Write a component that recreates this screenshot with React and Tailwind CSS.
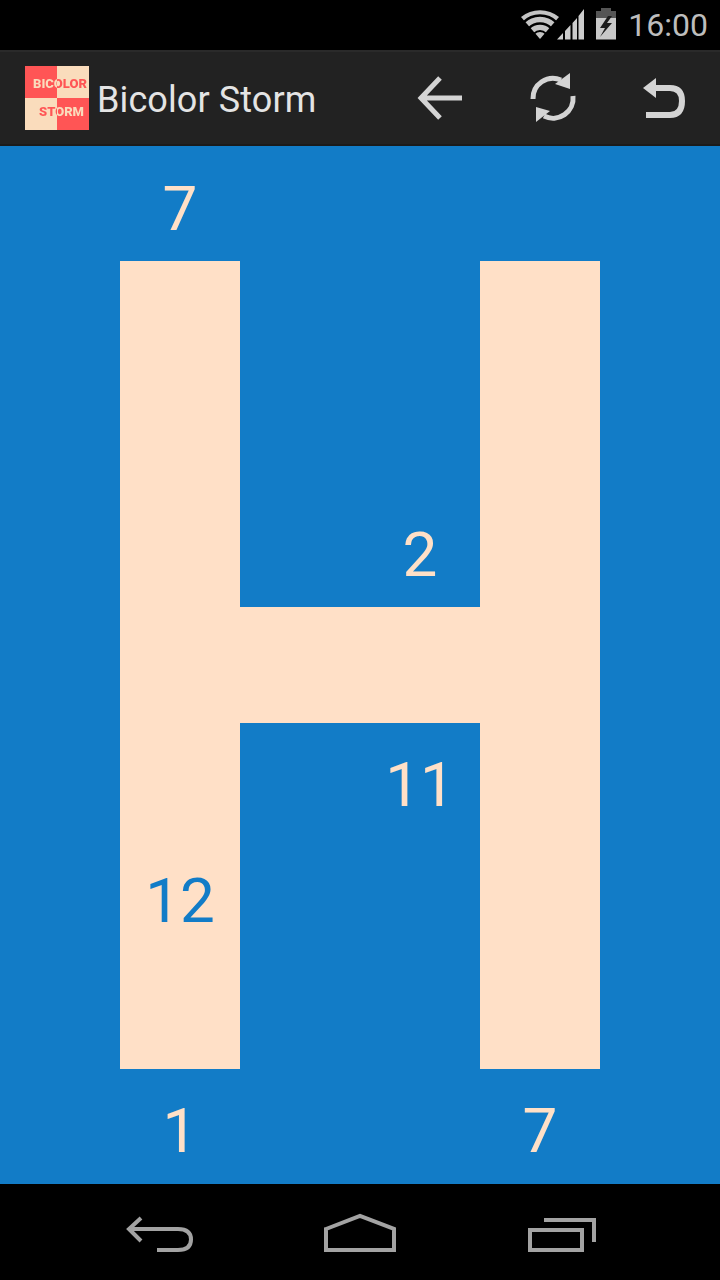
const CREAM = "bg-[#ffe0c7]";

const cells = [
  { r: 0, c: 1, n: "7" },
  { r: 3, c: 3, n: "2" },
  { r: 5, c: 3, n: "11" },
  { r: 6, c: 1, n: "12" },
  { r: 8, c: 1, n: "1" },
  { r: 8, c: 4, n: "7" },
];

function isFilled(r, c) {
  if (r >= 1 && r <= 7 && (c === 1 || c === 4)) return true;
  return r === 4 && c >= 1 && c <= 4;
}

function Board() {
  const items = [];
  for (let r = 0; r < 9; r++) {
    for (let c = 0; c < 6; c++) {
      const filled = isFilled(r, c);
      const hit = cells.find((x) => x.r === r && x.c === c);
      items.push(
        <div
          key={`${r}-${c}`}
          className={`flex items-center justify-center pt-[10px] text-[62px] leading-none font-normal ${filled ? `${CREAM} text-[#127cc7]` : "text-[#ffe0c7]"}`}
        >
          {hit ? hit.n : null}
        </div>
      );
    }
  }
  return <main className="grid flex-1 grid-cols-6 grid-rows-9 bg-[#127cc7]">{items}</main>;
}

function StatusIcons() {
  return (
    <svg width="100" height="50" viewBox="520 0 100 50" className="shrink-0">
      <path d="M540 39 L521 17 A30 30 0 0 1 559 17 Z" fill="#c4c4c4" />
      <circle cx="540" cy="39" r="23.500" fill="none" stroke="#000" strokeWidth="2.500" />
      <circle cx="540" cy="39" r="15.500" fill="none" stroke="#000" strokeWidth="2.500" />
      <circle cx="540" cy="39" r="8" fill="none" stroke="#000" strokeWidth="2" />
      <path d="M557 39.500 L563 33 V39.500 Z M565 31 L570.500 25 V39.500 H565 Z M572.500 23 L577 18 V39.500 H572.500 Z M578.500 16 L584 9 V39.500 H578.500 Z" fill="#cccccc" />
      <path d="M596 11 H601 V8 H611 V11 H616 V18 H596 Z" fill="#555555" />
      <path d="M596 18 H616 V39.500 H596 Z" fill="#c8c8c8" />
      <path d="M608 16 L600 28 H605 L600 37 L612 23 H607 L612 16 Z" fill="#1c1c1c" />
    </svg>
  );
}

function ArrowIcon() {
  return (
    <svg width="112" height="96" viewBox="384 50 112 96">
      <path d="M462 98 H422 M440 78 L421 98 L440 118" fill="none" stroke="#d4d4d4" strokeWidth="5" />
    </svg>
  );
}

function SyncIcon() {
  return (
    <svg width="112" height="96" viewBox="496 50 112 96">
      <path d="M533 99 A20 20 0 0 1 561 80" fill="none" stroke="#d4d4d4" strokeWidth="5" />
      <path d="M570 73 L570 89 L555 84 Z" fill="#d4d4d4" />
      <path d="M573 96 A20 20 0 0 1 544 116" fill="none" stroke="#d4d4d4" strokeWidth="5" />
      <path d="M536 107 L536 122 L550 111 Z" fill="#d4d4d4" />
    </svg>
  );
}

function UndoIcon() {
  return (
    <svg width="112" height="96" viewBox="608 50 112 96">
      <path d="M643 88 L656 78 V98 Z" fill="#d4d4d4" />
      <path d="M652 88 H670 Q682 88 682 101 Q682 115 670 115 H646" fill="none" stroke="#d4d4d4" strokeWidth="6" />
    </svg>
  );
}

function NavBack() {
  return (
    <svg width="80" height="96" viewBox="120 1184 80 96">
      <path d="M141 1218 L129 1229 L141 1241 M129 1229 H178 Q191 1229 191 1239.500 Q191 1250 178 1250 H157" fill="none" stroke="#a3a3a3" strokeWidth="4" />
    </svg>
  );
}

function NavHome() {
  return (
    <svg width="80" height="96" viewBox="320 1184 80 96">
      <path d="M326 1229 L360 1216 L394 1229 V1250 H326 Z" fill="none" stroke="#a3a3a3" strokeWidth="4" />
    </svg>
  );
}

function NavRecent() {
  return (
    <svg width="80" height="96" viewBox="520 1184 80 96">
      <path d="M530 1230 H582 V1250 H530 Z" fill="none" stroke="#a3a3a3" strokeWidth="4" />
      <path d="M544 1220 H594 V1242" fill="none" stroke="#a3a3a3" strokeWidth="4" />
    </svg>
  );
}

function Logo() {
  return (
    <div className="relative h-16 w-16 shrink-0 overflow-hidden bg-[#fadcbc] font-['Roboto',sans-serif] text-[13px] leading-none font-black">
      <div className="grid h-16 w-16 grid-cols-2 grid-rows-2">
        <div className="bg-[#ff5555]" />
        <div />
        <div />
        <div className="bg-[#ff5555]" />
      </div>
      <span className="absolute top-[11px] left-0 w-16 bg-[linear-gradient(90deg,#fadcbc_50%,#ff5555_50%)] bg-clip-text pl-[8px] text-transparent">
        BICOLOR
      </span>
      <span className="absolute top-[39px] left-0 w-16 bg-[linear-gradient(90deg,#ff5555_50%,#fadcbc_50%)] bg-clip-text pl-[14px] text-transparent">
        STORM
      </span>
    </div>
  );
}

export default function App() {
  return (
    <div className="flex h-[1280px] w-[720px] flex-col overflow-hidden bg-black font-['Roboto',sans-serif]">
      <header className="flex h-[50px] shrink-0 items-center justify-end bg-black">
        <StatusIcons />
        <span className="mr-[12px] ml-[8px] text-[32px] leading-none font-normal text-[#bdbdbd]">16:00</span>
      </header>
      <div className="flex h-[96px] shrink-0 items-center border-t-2 border-b-2 border-t-[#2a2a2a] border-b-[#1b1b1b] bg-[#222222] pl-[25px]">
        <Logo />
        <span className="mt-[4px] ml-[8px] text-[36px] leading-none font-normal tracking-[0.1px] text-[#e4e4e4]">Bicolor Storm</span>
        <div className="ml-auto flex">
          <ArrowIcon />
          <SyncIcon />
          <UndoIcon />
        </div>
      </div>
      <Board />
      <footer className="flex h-[96px] shrink-0 justify-center gap-[120px] bg-black">
        <NavBack />
        <NavHome />
        <NavRecent />
      </footer>
    </div>
  );
}
